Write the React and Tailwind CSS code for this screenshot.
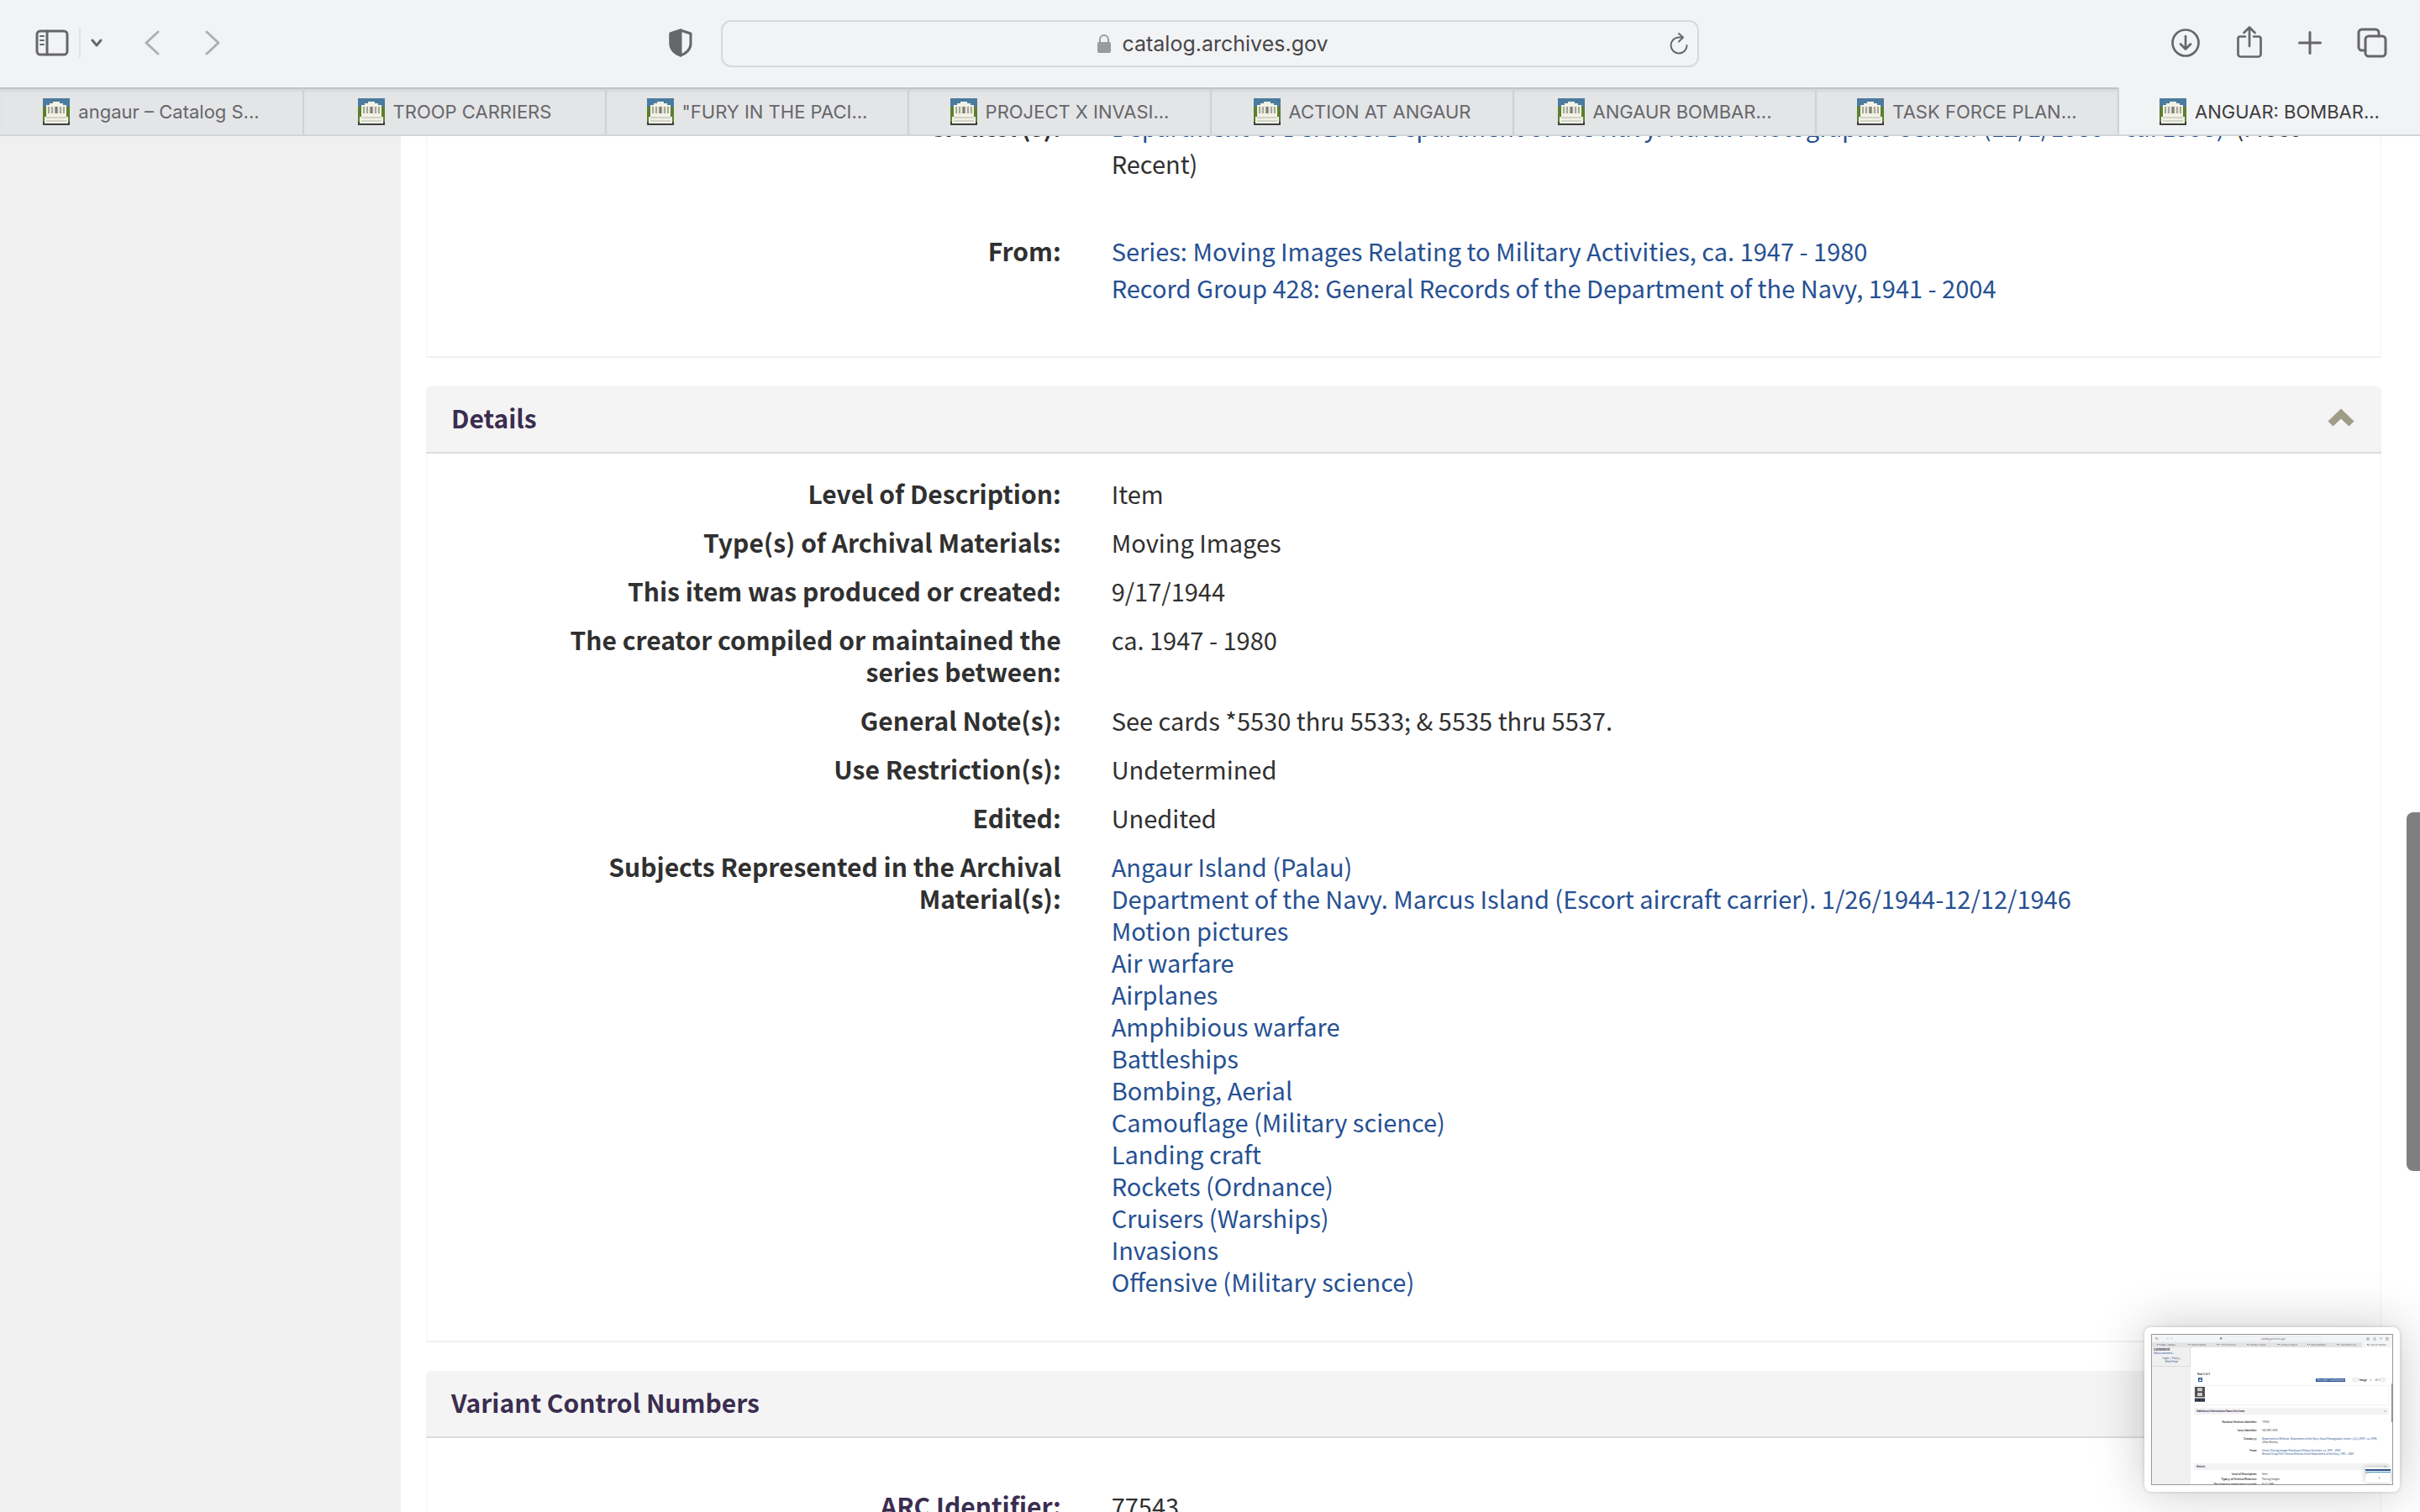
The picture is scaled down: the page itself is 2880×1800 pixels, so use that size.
const TABS = [
  "angaur – Catalog S...",
  "TROOP CARRIERS",
  '"FURY IN THE PACI...',
  "PROJECT X INVASI...",
  "ACTION AT ANGAUR",
  "ANGAUR BOMBAR...",
  "TASK FORCE PLAN...",
  "ANGUAR: BOMBAR...",
];

const SUBJECTS = [
  "Angaur Island (Palau)",
  "Department of the Navy. Marcus Island (Escort aircraft carrier). 1/26/1944-12/12/1946",
  "Motion pictures",
  "Air warfare",
  "Airplanes",
  "Amphibious warfare",
  "Battleships",
  "Bombing, Aerial",
  "Camouflage (Military science)",
  "Landing craft",
  "Rockets (Ordnance)",
  "Cruisers (Warships)",
  "Invasions",
  "Offensive (Military science)",
];

const DETAILS = [
  ["Level of Description:", "Item"],
  ["Type(s) of Archival Materials:", "Moving Images"],
  ["This item was produced or created:", "9/17/1944"],
  ["The creator compiled or maintained the series between:", "ca. 1947 - 1980"],
  ["General Note(s):", "See cards *5530 thru 5533; & 5535 thru 5537."],
  ["Use Restriction(s):", "Undetermined"],
  ["Edited:", "Unedited"],
];

const CREATOR =
  "Department of Defense. Department of the Navy. Naval Photographic Center. (12/1/1959 - ca. 1998)";
const SERIES = "Series: Moving Images Relating to Military Activities, ca. 1947 - 1980";
const GROUP = "Record Group 428: General Records of the Department of the Navy, 1941 - 2004";

const stroke = {
  fill: "none",
  stroke: "currentColor",
  strokeWidth: 3,
  strokeLinecap: "round",
  strokeLinejoin: "round",
};

function Favicon({ className = "size-8" }) {
  return (
    <svg viewBox="0 0 32 32" className={className} aria-hidden="true" shapeRendering="crispEdges">
      <rect width="32" height="32" fill="#4b7b9e" />
      <rect y="10" width="32" height="18" fill="#5c7f2c" />
      <rect y="28" width="32" height="4" fill="#3d4040" />
      <path d="M2 30V22H4V8H8V6H12V4H20V6H24V8H28V22H30V30Z" fill="#f1f1e6" />
      <path d="M6 10H26V18H6Z" fill="#a6a69b" />
      <path d="M9 10V18M13 10V18M19 10V18M23 10V18" stroke="#e9e9dd" strokeWidth="2" />
      <path d="M16 10V18" stroke="#7c7c73" strokeWidth="2" />
      <path d="M4 23H28M4 27H28" stroke="#d2d2c8" strokeWidth="2" />
    </svg>
  );
}

function SidebarIcon() {
  return (
    <svg viewBox="0 0 40 32" className="h-8 w-10" {...stroke}>
      <rect x="2" y="2" width="36" height="28" rx="4" />
      <path d="M14 2V30" />
      <path d="M6 8H10M6 13H10M6 18H10" strokeWidth="2" />
    </svg>
  );
}

function ShieldIcon() {
  return (
    <svg viewBox="0 0 28 34" className="h-[34px] w-7" {...stroke}>
      <path d="M14 2L26 6V18C26 25 20 30 14 32C8 30 2 25 2 18V6Z" />
      <path d="M14 2V32C8 30 2 25 2 18V6Z" fill="currentColor" />
    </svg>
  );
}

function LockIcon() {
  return (
    <svg viewBox="0 0 18 24" className="h-6 w-[18px]" aria-hidden="true">
      <path d="M4 11V7A5 5 0 0 1 14 7V11" fill="none" stroke="#9a9b9d" strokeWidth="2" />
      <rect x="1" y="10" width="16" height="13" rx="2" fill="#9a9b9d" />
    </svg>
  );
}

function ReloadIcon() {
  return (
    <svg viewBox="0 0 24 28" className="h-7 w-6" {...stroke} strokeWidth="2">
      <path d="M21.500 16A9.500 9.500 0 1 1 12 6.500H16" />
      <path d="M12 2L17 6.500L12 11.500" />
    </svg>
  );
}

function DownloadIcon() {
  return (
    <svg viewBox="0 0 36 36" className="size-9" {...stroke}>
      <circle cx="18" cy="18" r="15.500" strokeWidth="2.700" />
      <path d="M18 10V25M12 19.500L18 25.500L24 19.500" strokeWidth="2.700" />
    </svg>
  );
}

function ShareIcon() {
  return (
    <svg viewBox="0 0 32 40" className="h-10 w-8" {...stroke} strokeWidth="2.700">
      <path d="M11 13.500H5A2.500 2.500 0 0 0 2.500 16V34.500A3 3 0 0 0 5.500 37.500H26.500A3 3 0 0 0 29.500 34.500V16A2.500 2.500 0 0 0 27 13.500H21" />
      <path d="M16 25V3M9.500 9L16 2.500L22.500 9" />
    </svg>
  );
}

function PlusIcon() {
  return (
    <svg viewBox="0 0 28 28" className="size-7" {...stroke}>
      <path d="M14 1.500V26.500M1.500 14H26.500" />
    </svg>
  );
}

function OverviewIcon() {
  return (
    <svg viewBox="0 0 36 36" className="size-9" {...stroke}>
      <rect x="10" y="10" width="24" height="24" rx="4" />
      <path d="M10 27H6A4 4 0 0 1 2 23V6A4 4 0 0 1 6 2H22A4 4 0 0 1 26 6V10" />
    </svg>
  );
}

function Toolbar() {
  return (
    <div className="grid h-[104px] grid-cols-[1fr_1164px_1fr] items-center text-[#666769]">
      <div className="flex items-center pb-0.5 pl-[42px] pr-[34px]">
        <button aria-label="Show sidebar" className="h-8">
          <SidebarIcon />
        </button>
        <span className="ml-3 h-9 w-0.5 bg-[#e2e3e5]" />
        <button aria-label="Tab groups" className="ml-2.5 px-0.5">
          <svg viewBox="0 0 14 10" className="h-2.5 w-3.5" {...stroke}>
            <path d="M2 2L7 8L12 2" />
          </svg>
        </button>
        <button aria-label="Back" className="ml-12 text-[#aeafb1]">
          <svg viewBox="0 0 18 30" className="h-[30px] w-[18px]" {...stroke}>
            <path d="M16 2L2 15L16 28" />
          </svg>
        </button>
        <button aria-label="Forward" className="ml-[54px] text-[#aeafb1]">
          <svg viewBox="0 0 18 30" className="h-[30px] w-[18px]" {...stroke}>
            <path d="M2 2L16 15L2 28" />
          </svg>
        </button>
        <button aria-label="Privacy report" className="ml-auto">
          <ShieldIcon />
        </button>
      </div>
      <div className="flex h-14 items-center rounded-xl border-2 border-[#d7d8da] pl-10 pr-2.5">
        <button className="flex flex-1 items-center justify-center gap-3 text-[25px] leading-8 text-[#464749]">
          <LockIcon />
          <span>catalog.archives.gov</span>
        </button>
        <button aria-label="Reload page">
          <ReloadIcon />
        </button>
      </div>
      <div className="flex items-center justify-end gap-[42px] pb-0.5 pr-[39px]">
        <button aria-label="Downloads">
          <DownloadIcon />
        </button>
        <button aria-label="Share" className="pb-0.5">
          <ShareIcon />
        </button>
        <button aria-label="New tab">
          <PlusIcon />
        </button>
        <button aria-label="Tab overview">
          <OverviewIcon />
        </button>
      </div>
    </div>
  );
}

function TabBar() {
  return (
    <nav className="grid h-[58px] grid-cols-8 border-b-2 border-[#d3d4d6]" aria-label="Tabs">
      {TABS.map((title, i) => (
        <button
          key={title}
          aria-current={i === 7 ? "page" : undefined}
          className={
            i === 7
              ? "flex items-center justify-center gap-2.5 border-l-2 border-[#d0d1d3] pt-0.5 text-[22px] leading-7 text-[#3c3d3f]"
              : "flex items-center justify-center gap-2.5 border-l-2 border-t-2 border-l-[#d0d1d3] border-t-[#c2c3c5] bg-[#e4e5e7] text-[22px] leading-7 text-[#66676a] shadow-[inset_0_4px_4px_-2px_rgba(0,0,0,0.08)] first:border-l-0"
          }
        >
          <Favicon />
          <span className="whitespace-nowrap">{title}</span>
        </button>
      ))}
    </nav>
  );
}

function Link({ children, block }) {
  return (
    <a
      href="#"
      className={block ? "block text-[#265092] hover:underline" : "text-[#265092] hover:underline"}
    >
      {children}
    </a>
  );
}

function Row({ label, children, accent }) {
  return (
    <div className="grid grid-cols-3">
      <dt
        className={
          accent
            ? "pl-[60px] pr-[30px] text-right text-[30px] font-bold text-[#3b2d50]"
            : "pl-[60px] pr-[30px] text-right text-[30px] font-bold text-[#303030]"
        }
      >
        {label}
      </dt>
      <dd className="col-span-2 px-[30px]">{children}</dd>
    </div>
  );
}

function SectionHeader({ title }) {
  return (
    <h2 className="rounded-t-md border-b-2 border-[#dcdcdc] bg-[#f4f4f4]">
      <button
        aria-expanded="true"
        className="flex h-[78px] w-full items-center justify-between px-[30px] pb-1 text-left text-[30px] font-bold text-[#3b2d50]"
      >
        {title}
        <svg viewBox="0 0 36 24" className="h-6 w-9" aria-hidden="true">
          <path
            d="M18 2L33 16.500L27.500 22L18 13L8.500 22L3 16.500Z"
            fill="#9f9c88"
            stroke="#9f9c88"
            strokeLinejoin="round"
          />
        </svg>
      </button>
    </h2>
  );
}

function MiniHeader({ title }) {
  return (
    <div className="flex h-2 items-center justify-between bg-[#f3f3f3] px-[3px] font-bold text-[#3b2d50]">
      <span>{title}</span>
      <svg viewBox="0 0 6 4" className="h-[2px] w-[3px]">
        <path d="M1 3L3 1L5 3" fill="none" stroke="#6c7a5a" strokeWidth="1.500" />
      </svg>
    </div>
  );
}

function MiniRow({ label, children }) {
  return (
    <div className="flex">
      <span className="w-[75px] shrink-0 text-right font-bold">{label}</span>
      <div className="ml-1.5 w-[142px]">{children}</div>
    </div>
  );
}

function Thumbnail() {
  return (
    <button
      aria-label="Open screen capture preview"
      className="absolute bottom-6 right-6 rounded-lg bg-white p-2 text-left shadow-[0_0_60px_rgba(0,0,0,0.22),0_0_4px_rgba(0,0,0,0.18)]"
    >
      <div className="relative flex h-[180px] w-72 flex-col overflow-hidden border border-[#989898] bg-white text-[3px] leading-[4px] text-[#333]">
        <div className="flex h-[9px] shrink-0 items-center bg-[#f3f4f6] font-['Inter',sans-serif] text-[#666769]">
          <div className="flex flex-1 items-center gap-[4px] pl-[4px] pr-[3px]">
            <svg viewBox="0 0 40 32" className="h-[3px] w-[4px]" {...stroke}>
              <rect x="2" y="2" width="36" height="28" rx="4" />
              <path d="M14 2V30" />
            </svg>
            <svg viewBox="0 0 60 30" className="ml-1 h-[3px] w-[10px]" {...stroke}>
              <path d="M14 2L2 15L14 28M46 2L58 15L46 28" />
            </svg>
            <svg viewBox="0 0 28 34" className="ml-auto h-[3px] w-[3px]" {...stroke}>
              <path d="M14 2L26 6V18C26 25 20 30 14 32C8 30 2 25 2 18V6Z" />
              <path d="M14 2V32C8 30 2 25 2 18V6Z" fill="currentColor" />
            </svg>
          </div>
          <div className="h-[6px] w-[116px] rounded-sm border border-[#e9eaec] text-center leading-[4px]">
            catalog.archives.gov
          </div>
          <div className="flex flex-1 items-center justify-end gap-1 pr-1">
            <svg viewBox="0 0 36 36" className="size-1" {...stroke}>
              <circle cx="18" cy="18" r="15" />
              <path d="M18 10V25M12 19L18 25L24 19" />
            </svg>
            <svg viewBox="0 0 32 40" className="size-1" {...stroke}>
              <path d="M10 13H3V37H29V13H22M16 25V3M9 9L16 2L23 9" />
            </svg>
            <svg viewBox="0 0 28 28" className="size-[3px]" {...stroke}>
              <path d="M14 2V26M2 14H26" />
            </svg>
            <svg viewBox="0 0 36 36" className="size-1" {...stroke}>
              <rect x="10" y="10" width="24" height="24" rx="4" />
              <path d="M10 27H2V2H26V10" />
            </svg>
          </div>
        </div>
        <div className="grid h-[6px] shrink-0 grid-cols-8 font-['Inter',sans-serif] text-[2px] text-[#66676a]">
          {TABS.map((title, i) => (
            <span
              key={title}
              className={
                i === 7
                  ? "flex items-center justify-center gap-px bg-[#f3f4f6]"
                  : "flex items-center justify-center gap-px bg-[#e2e3e5]"
              }
            >
              <Favicon className="size-[3px]" />
              <span className="whitespace-nowrap">{title}</span>
            </span>
          ))}
        </div>
        <div className="flex min-h-0 flex-1">
          <div className="w-[46px] shrink-0 bg-[#f0f0f0]">
            <div className="h-[23px] border-b border-r border-[#dcdcdc] pl-0.5 text-[#265092]">
              <p className="text-[4px] font-bold text-[#3b2d50]">Comment</p>
              <p className="mt-px">Add a comment...</p>
              <p className="mt-0.5 text-center">
                Login &nbsp;<span className="text-[#333]">|</span>&nbsp; Policy &nbsp;
                <span className="text-[#333]">|</span>
              </p>
              <p className="text-center">Need Help?</p>
            </div>
          </div>
          <div className="min-w-0 flex-1 px-1">
            <p className="pl-1 pt-[30px] font-bold">Reel 1 of 1</p>
            <div className="mt-0.5 flex h-[5px] items-center pl-[5px] pr-1">
              <svg viewBox="0 0 10 10" className="size-[5px]">
                <rect width="10" height="10" rx="1" fill="#265092" />
                <path d="M5 1L7.500 5H2.500ZM2 6H8V8H2Z" fill="#fff" />
              </svg>
              <span className="ml-auto bg-[#265092] px-px text-white">View/Add Contributions</span>
              <span className="ml-2 rounded-xs border border-[#e2e2e2] px-px leading-[3px]">
                ‹‹ ‹
              </span>
              <span className="ml-px font-bold">Image</span>
              <span className="ml-1">1</span>
              <span className="ml-1">of 1</span>
              <span className="rounded-xs border border-[#e2e2e2] px-px leading-[3px]">› ››</span>
            </div>
            <div className="mt-1 h-6 border border-[#f2f2f2] pt-px">
              <svg viewBox="0 0 36 54" className="h-[18px] w-3">
                <rect width="36" height="37" fill="#444" />
                <path d="M9 4H27V16H9ZM9 21H27V33H9Z" fill="#ccc" />
                <path d="M3 3V35M33 3V35" stroke="#aaa" strokeWidth="2" strokeDasharray="3 3" />
                <rect y="41" width="36" height="12" fill="#1d2433" />
                <path d="M4 47H14M20 47H32" stroke="#8f9cb3" strokeWidth="3" strokeDasharray="3 2" />
              </svg>
            </div>
            <div className="mt-[3px]">
              <MiniHeader title="Additional Information About this Item" />
              <div className="flex flex-col gap-[6px] pb-[9px] pt-[7px]">
                <MiniRow label="National Archives Identifier:">77543</MiniRow>
                <MiniRow label="Local Identifier:">428 NPC 5541</MiniRow>
                <MiniRow label="Creator(s):">
                  <span className="text-[#265092]">{CREATOR}</span> (Most Recent)
                </MiniRow>
                <MiniRow label="From:">
                  <p className="text-[#265092]">{SERIES}</p>
                  <p className="text-[#265092]">{GROUP}</p>
                </MiniRow>
              </div>
              <MiniHeader title="Details" />
              <div className="flex flex-col gap-[2px] pt-[3px]">
                {DETAILS.slice(0, 3).map(([label, value]) => (
                  <MiniRow key={label} label={label}>
                    {value}
                  </MiniRow>
                ))}
              </div>
            </div>
          </div>
        </div>
        <div className="absolute right-0 top-[58px] h-[46px] w-px bg-[#8a8a8a]" />
        <div className="absolute bottom-[2px] right-[2px] h-[18px] w-[30px] bg-white shadow-[0_0_6px_rgba(0,0,0,0.25)]">
          <div className="mt-[2px] h-[2px] bg-[#2d4d86]" />
          <div className="mt-px h-px bg-[#3a86b0]" />
          <div className="mt-px h-px w-1 bg-[#c9ccd1]" />
          <div className="ml-4 mt-1 size-px bg-[#444]" />
        </div>
      </div>
    </button>
  );
}

export default function App() {
  return (
    <div className="relative flex h-screen flex-col overflow-hidden bg-white font-['Noto_Sans_CJK_SC',sans-serif]">
      <header className="relative shrink-0 bg-[#f2f3f5] font-['Inter',sans-serif]">
        <Toolbar />
        <TabBar />
      </header>

      <div className="flex min-h-0 flex-1 overflow-hidden">
        <aside className="w-[477px] shrink-0 bg-[#f0f0f0]" />
        <main className="-mt-[34px] min-w-0 flex-1 pl-[30px] pr-[46px] text-[29px] leading-[38px] text-[#303030]">
          <section className="mb-[34px] border-x-2 border-b-2 border-[#f8f8f8] border-b-[#f0f0f0] px-7 pb-[60px] leading-[44px]">
            <dl className="flex flex-col gap-[60px]">
              <Row label="Creator(s):">
                <Link>{CREATOR}</Link>&nbsp; (Most Recent)
              </Row>
              <Row label="From:">
                <Link block>{SERIES}</Link>
                <Link block>{GROUP}</Link>
              </Row>
            </dl>
          </section>

          <section className="mb-[34px]">
            <SectionHeader title="Details" />
            <div className="border-x-2 border-b-2 border-[#f8f8f8] border-b-[#f0f0f0] px-7 pb-[52px] pt-7">
              <dl className="flex flex-col gap-5">
                {DETAILS.map(([label, value]) => (
                  <Row key={label} label={label}>
                    {value}
                  </Row>
                ))}
                <Row label="Subjects Represented in the Archival Material(s):">
                  {SUBJECTS.map((s) => (
                    <Link key={s} block>
                      {s}
                    </Link>
                  ))}
                </Row>
              </dl>
            </div>
          </section>

          <section>
            <SectionHeader title="Variant Control Numbers" />
            <div className="border-x-2 border-[#f8f8f8] px-7 pt-[58px] leading-[44px]">
              <dl>
                <Row label="ARC Identifier:" accent>
                  77543
                </Row>
              </dl>
            </div>
          </section>
        </main>
      </div>

      <div className="absolute right-0 top-[967px] h-[427px] w-4 rounded-l-lg bg-[#7f7f80]" />
      <Thumbnail />
    </div>
  );
}
